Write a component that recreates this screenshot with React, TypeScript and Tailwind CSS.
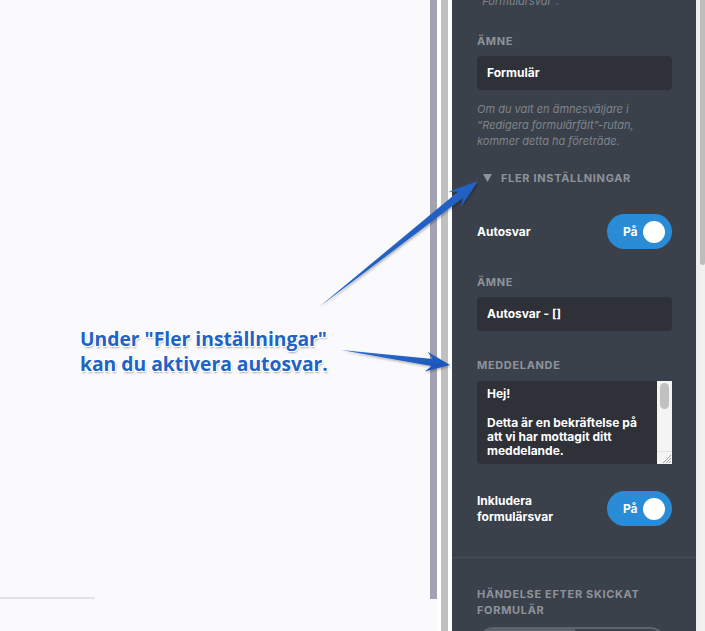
import React from 'react';

type Pt = [number, number];

// tapered callout arrow: pointy tail, barbed head
function arrowPoints(tail: Pt, tip: Pt, headLen: number, headW: number, shaftW: number, notch: number) {
  const dx = tip[0] - tail[0];
  const dy = tip[1] - tail[1];
  const len = Math.hypot(dx, dy);
  const ux = dx / len, uy = dy / len;
  const nx = -uy, ny = ux;
  const at = (d: number, w: number): Pt => [tip[0] - ux * d + nx * w, tip[1] - uy * d + ny * w];
  const pts: Pt[] = [
    tail,
    at(headLen - notch, shaftW),
    at(headLen, headW),
    tip,
    at(headLen, -headW),
    at(headLen - notch, -shaftW),
  ];
  return pts.map((p) => `${p[0].toFixed(1)},${p[1].toFixed(1)}`).join(' ');
}

const panelFont = { fontFamily: 'Inter, "Noto Sans", sans-serif' };

function Label({ children }: { children: React.ReactNode }) {
  return (
    <p className="text-[11px] leading-[14px] font-bold tracking-[0.06em] text-[#8d939c] uppercase">
      {children}
    </p>
  );
}

function Toggle() {
  return (
    <div className="w-[65px] h-[35px] rounded-full bg-[#2a8cd6] flex items-center justify-between pl-[16px] pr-[7px] flex-shrink-0">
      <span className="text-white text-[12px] font-bold">På</span>
      <span className="w-[22px] h-[22px] rounded-full bg-white" />
    </div>
  );
}

export default function App() {
  return (
    <div className="relative w-[705px] h-[631px] overflow-hidden flex bg-[#fafafc]">
      {/* page behind */}
      <div className="w-[430px] flex flex-col">
        <div className="mt-[597px] h-[2px] w-[95px] bg-[#e3e2ea]" />
      </div>
      <div className="w-[7px]">
        <div className="h-[599px] bg-[#a3a2b0]" />
      </div>
      <div className="w-[4px] bg-white" />
      <div className="w-[7px] bg-[#c0c0c0]" />
      <div className="w-[4px] bg-white" />

      {/* settings panel */}
      <div
        className="w-[244px] bg-[#3b414a] flex flex-col overflow-hidden pl-[25px] pr-[24px] *:shrink-0"
        style={panelFont}
      >
        <p className="-mt-[7px] text-[11px] leading-[16px] italic text-[#7e848d]">”Formulärsvar”.</p>

        <div className="mt-[25px]">
          <Label>Ämne</Label>
        </div>
        <div className="mt-[8px] h-[34px] rounded-[4px] bg-[#2e3138] flex items-center px-[10px]">
          <span className="text-white text-[12px] font-bold">Formulär</span>
        </div>
        <p className="mt-[11px] text-[11px] leading-[16px] italic text-[#7e848d]">
          Om du valt en ämnesväljare i<br />
          ”Redigera formulärfält”-rutan,<br />
          kommer detta ha företräde.
        </p>

        <div className="mt-[22px] flex items-center gap-[9px] pl-[6px]">
          <svg width="9" height="8" viewBox="0 0 9 8">
            <polygon points="0,0 9,0 4.5,8" fill="#8d939c" />
          </svg>
          <Label>Fler inställningar</Label>
        </div>

        <div className="mt-[29px] flex items-center justify-between">
          <span className="text-white text-[12px] font-bold">Autosvar</span>
          <Toggle />
        </div>

        <div className="mt-[26px]">
          <Label>Ämne</Label>
        </div>
        <div className="mt-[8px] h-[34px] rounded-[4px] bg-[#2e3138] flex items-center px-[10px]">
          <span className="text-white text-[12px] font-bold">Autosvar - []</span>
        </div>

        <div className="mt-[27px]">
          <Label>Meddelande</Label>
        </div>
        <div className="mt-[9px] h-[83px] rounded-l-[4px] bg-[#2e3138] flex overflow-hidden">
          <div className="flex-1 pl-[10px] pt-[6px] text-white text-[12px] font-bold leading-[14.3px]">
            Hej!<br />
            <br />
            Detta är en bekräftelse på<br />
            att vi har mottagit ditt<br />
            meddelande.
          </div>
          <div className="w-[15px] bg-[#f4f4f4] flex flex-col items-center">
            <div className="mt-[2px] w-[9px] h-[26px] rounded-full bg-[#c1c1c1]" />
            <div className="mt-auto w-full h-[13px] border-t border-[#e2e2e2] flex items-end justify-end">
              <svg width="12" height="12" viewBox="0 0 12 12">
                <path d="M11 3 L3 11 M11 6 L6 11 M11 9 L9 11" stroke="#a0a0a0" strokeWidth="1" />
              </svg>
            </div>
          </div>
        </div>

        <div className="mt-[27px] flex items-center justify-between">
          <span className="text-white text-[12px] font-bold leading-[16px]">
            Inkludera<br />formulärsvar
          </span>
          <Toggle />
        </div>

        <div className="mt-[31px] -ml-[25px] -mr-[24px] h-[1px] bg-[#474d57]" />

        <p className="mt-[28px] text-[11px] leading-[16px] font-bold tracking-[0.06em] text-[#8d939c] uppercase">
          Händelse efter skickat<br />formulär
        </p>
        <div className="mt-[9px] h-[34px] w-[190px] rounded-[18px] border-2 border-[#5b636e] flex overflow-hidden">
          <div className="w-[96px] bg-[#5b636e]" />
          <div className="flex-1" />
        </div>
      </div>

      <div className="w-[4px] bg-[#eeeeee]" />
      <div className="w-[5px] bg-[#f1f1f1]">
        <div className="h-[265px] bg-[#bdbdbd] rounded-b-[3px]" />
      </div>

      {/* callout overlay */}
      <svg className="absolute inset-0 pointer-events-none" width="705" height="631">
        <defs>
          <linearGradient id="ab" x1="0" y1="0" x2="1" y2="1">
            <stop offset="0" stopColor="#2a6fd3" />
            <stop offset="1" stopColor="#1a52b5" />
          </linearGradient>
          <filter id="sh" x="-10%" y="-10%" width="120%" height="120%">
            <feDropShadow dx="1" dy="1.5" stdDeviation="1" floodColor="#000" floodOpacity="0.3" />
          </filter>
        </defs>
        <polygon points={arrowPoints([319, 307], [478, 181], 30, 10, 4, 8)} fill="url(#ab)" filter="url(#sh)" />
        <polygon points={arrowPoints([341, 350], [450, 365], 24, 10, 3.6, 6)} fill="url(#ab)" filter="url(#sh)" />
      </svg>
      <div
        className="absolute left-[80px] top-[326px] text-[19.3px] leading-[25px] font-bold text-[#2162c4] [text-shadow:-1px_-1px_0_#fff,1px_-1px_0_#fff,-1px_1px_0_#fff,1px_1px_0_#fff,0_0_2px_#fff,1px_2px_2px_rgba(0,0,0,0.35)]"
        style={{ fontFamily: '"Open Sans", sans-serif' }}
      >
        Under "Fler inställningar"<br />
        kan du aktivera autosvar.
      </div>
    </div>
  );
}
